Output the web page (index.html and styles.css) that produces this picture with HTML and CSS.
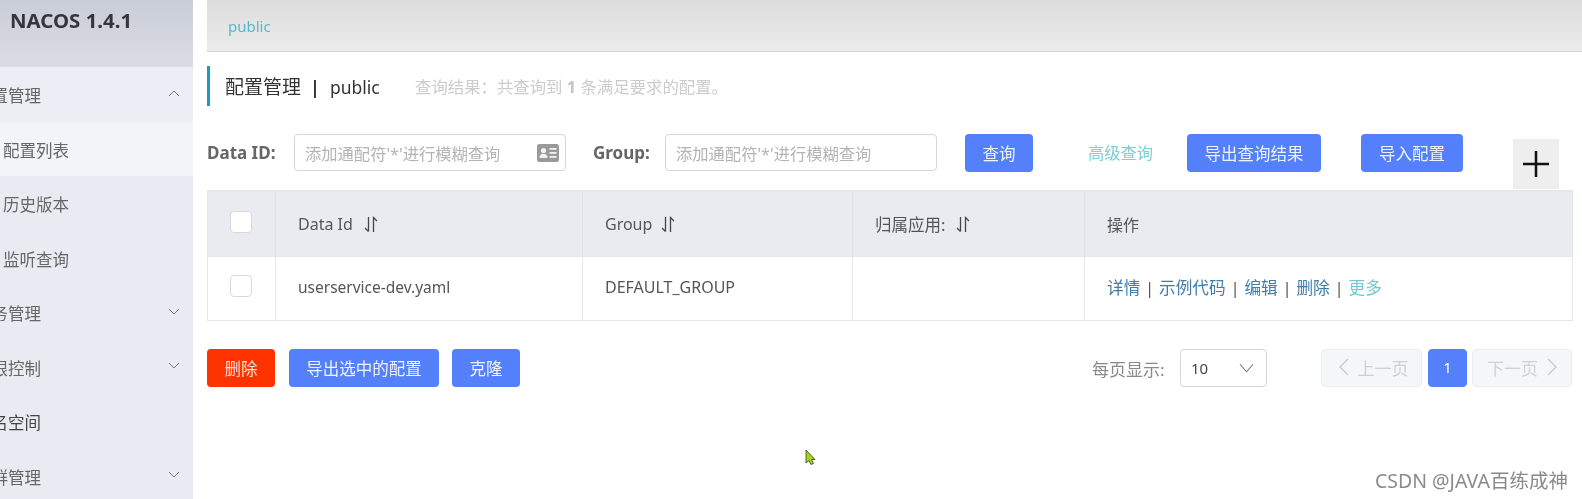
FILE: index.html
```html
<!DOCTYPE html>
<html lang="zh">
<head>
<meta charset="utf-8">
<title>NACOS</title>
<link rel="stylesheet" href="styles.css">
</head>
<body>
<div class="app">
  <aside class="sidebar">
    <div class="brand">NACOS 1.4.1</div>
    <nav class="menu">
      <div class="item group"><span class="clip">配置管理</span>
        <svg class="chev" viewBox="0 0 12 7"><path d="M1 6 6 1l5 5"/></svg></div>
      <div class="item sub active">配置列表</div>
      <div class="item sub">历史版本</div>
      <div class="item sub">监听查询</div>
      <div class="item group"><span class="clip">服务管理</span>
        <svg class="chev" viewBox="0 0 12 7"><path d="M1 1l5 5 5-5"/></svg></div>
      <div class="item group"><span class="clip">权限控制</span>
        <svg class="chev" viewBox="0 0 12 7"><path d="M1 1l5 5 5-5"/></svg></div>
      <div class="item group"><span class="clip dark">命名空间</span></div>
      <div class="item group"><span class="clip">集群管理</span>
        <svg class="chev" viewBox="0 0 12 7"><path d="M1 1l5 5 5-5"/></svg></div>
    </nav>
  </aside>
  <main class="main">
    <div class="topbar"><span class="ns">public</span></div>
    <div class="title">
      <h1>配置管理<span class="sep">|</span><span class="ns-name">public</span></h1>
      <p class="result">查询结果：共查询到 <b>1</b> 条满足要求的配置。</p>
    </div>
    <div class="filters">
      <label class="lbl lbl-id">Data ID:</label>
      <div class="input input-id"><span>添加通配符'*'进行模糊查询</span>
        <svg class="card" viewBox="0 0 22 18"><rect width="22" height="18" rx="2.5"/><circle cx="6.5" cy="6.5" r="2.6" class="cut"/><path class="cut" d="M2.5 14c0-3 1.8-4.2 4-4.2s4 1.2 4 4.2z"/><path class="cut" d="M12.5 4h7v1.8h-7zM12.5 8h7v1.8h-7zM12.5 12h7v1.8h-7z"/></svg>
      </div>
      <label class="lbl lbl-group">Group:</label>
      <div class="input input-group"><span>添加通配符'*'进行模糊查询</span></div>
      <button class="btn btn-query">查询</button>
      <a class="adv">高级查询</a>
      <button class="btn btn-export">导出查询结果</button>
      <button class="btn btn-import">导入配置</button>
      <button class="plus"><svg viewBox="0 0 26 26"><path d="M13 0v26M0 13h26"/></svg></button>
    </div>
    <div class="table">
      <div class="row head">
        <div class="cell c0"><i class="check"></i></div>
        <div class="cell c1">Data Id<svg class="sort" viewBox="0 0 14 17"><path d="M4.500 1v14.500M1 12l3.500 3.500M9.500 16V1.500L13 5"/></svg></div>
        <div class="cell c2">Group<svg class="sort sort-tight" viewBox="0 0 14 17"><path d="M4.500 1v14.500M1 12l3.500 3.500M9.500 16V1.500L13 5"/></svg></div>
        <div class="cell c3 app-col">归属应用:<svg class="sort" viewBox="0 0 14 17"><path d="M4.500 1v14.500M1 12l3.500 3.500M9.500 16V1.500L13 5"/></svg></div>
        <div class="cell c4">操作</div>
      </div>
      <div class="row body">
        <div class="cell c0"><i class="check"></i></div>
        <div class="cell c1 file">userservice-dev.yaml</div>
        <div class="cell c2">DEFAULT_GROUP</div>
        <div class="cell c3"></div>
        <div class="cell c4 ops"><a>详情</a><s>|</s><a>示例代码</a><s>|</s><a>编辑</a><s>|</s><a>删除</a><s>|</s><a class="more">更多</a></div>
      </div>
    </div>
    <div class="footer">
      <button class="btn btn-del">删除</button>
      <button class="btn btn-sel">导出选中的配置</button>
      <button class="btn btn-clone">克隆</button>
      <span class="perpage">每页显示:</span>
      <div class="select"><span>10</span><svg viewBox="0 0 16 10"><path d="M1 1l7 8 7-8"/></svg></div>
      <div class="page prev"><svg viewBox="0 0 10 18"><path d="M9 1 1 9l8 8"/></svg>上一页</div>
      <div class="page cur">1</div>
      <div class="page next">下一页<svg viewBox="0 0 10 18"><path d="M1 1l8 8-8 8"/></svg></div>
    </div>
    <div class="bottom">
      <svg class="cursor" viewBox="0 0 12 17"><path d="M1 1v13l3-2.500 2 4 2.500-1-2-4H10z"/></svg>
      <span class="mark">CSDN @JAVA百练成神</span>
    </div>
  </main>
</div>
</body>
</html>
```
FILE: styles.css
```css
* { box-sizing: border-box; }
html, body { margin: 0; height: 100%; overflow: hidden; background: #fff; }
body { font-family: "Noto Sans", "Noto Sans CJK SC", sans-serif; color: #555; }
.app { display: flex; width: 1582px; height: 499px; filter: blur(0.45px); }

.sidebar { width: 193px; flex: none; background: #e9ebf2; }
.brand { height: 67px; padding: 7px 0 0 10px; font-size: 20.400px; line-height: 26px; font-weight: 700; color: #33363c; white-space: nowrap;
  background: linear-gradient(180deg, #c9cdd7, #dadde6); }
.item { height: 54.500px; display: flex; align-items: center; justify-content: space-between; font-size: 16.500px; color: #666; overflow: hidden; padding: 2px 13px 0 0; }
.group { background: #e9ebf2; }
.menu .item:first-child { background: #ebeef5; }
.sub { padding-left: 3px; }
.active { background: #f2f4f9; }
.clip { margin-left: -25px; white-space: nowrap; }
.clip.dark { color: #444; }
.chev { width: 12px; height: 7px; fill: none; stroke: #777; stroke-width: 1; margin-top: -4px; }

.main { flex: 1; padding: 0 0 0 14px; display: flex; flex-direction: column; min-width: 0; background: #fff; }
.topbar { height: 52px; background: linear-gradient(180deg, #dcdcdc, #ececec); border-bottom: 1px solid #d4d4d4; padding: 16px 0 0 21px; }
.ns { font-size: 15px; line-height: 20px; color: #58b7cf; display: block; }

.title { height: 40px; margin-top: 14px; border-left: 3px solid #1a9cbe; display: flex; align-items: center; padding-left: 15px; }
.title h1 { margin: 0; font-size: 19px; font-weight: 400; color: #333; width: 190px; white-space: nowrap; }
.sep { margin: 0 10px 0 9px; font-size: 18px; font-weight: 700; }
.ns-name { font-size: 17.500px; }
.result { margin: 0; font-size: 16.400px; color: #ccc; white-space: nowrap; }
.result b { color: #c4c4c4; }

.filters { height: 84px; padding-top: 28px; display: flex; align-items: flex-start; }
.lbl { font-size: 17px; font-weight: 700; color: #666; line-height: 37px; white-space: nowrap; }
.lbl-id { width: 87px; }
.lbl-group { width: 72px; margin-left: 27px; }
.input { height: 37px; width: 272px; border: 1px solid #d4d6da; border-radius: 4px; background: #fff; display: flex; align-items: center; justify-content: space-between; padding: 0 6px 0 10px; font-size: 16.300px; color: #b4b4b4; white-space: nowrap; }
.card { width: 22px; height: 18px; fill: #9a9a9a; }
.card .cut { fill: #f2f2f2; }
.btn { border: none; border-radius: 4px; height: 38px; background: #5580fb; color: #eef3ff; font: inherit; font-size: 16.500px; padding: 0; white-space: nowrap; }
.btn-query { width: 68px; margin-left: 28px; }
.adv { width: 66px; margin-left: 55px; line-height: 38px; font-size: 16.300px; color: #7ccfd9; white-space: nowrap; }
.btn-export { width: 134px; margin-left: 33px; }
.btn-import { width: 102px; margin-left: 40px; }
.plus { width: 46px; height: 50px; margin: 5px 0 0 50px; flex: none; border: none; background: #eeeeee; padding: 0; display: flex; align-items: center; justify-content: center; }
.plus svg { width: 26px; height: 26px; fill: none; stroke: #111; stroke-width: 2.500; }

.table { width: 1366px; border: 1px solid #e6e7ea; border-width: 2px 1px 1px; }
.row { display: flex; }
.head { height: 65px; background: #eaebf0; }
.body { height: 63px; background: #fff; }
.cell { display: flex; align-items: center; font-size: 16px; color: #555; border-right: 1px solid #e6e7ea; padding-left: 22px; white-space: nowrap; }
.cell:last-child { border-right: none; }
.head .cell { border-right-color: #e2e3e8; border-bottom: 1px solid #e6e7ea; }
.c0 { width: 68px; padding-left: 22px; }
.c1 { width: 307px; }
.c2 { width: 270px; }
.c3 { width: 232px; }
.c4 { flex: 1; }
.app-col { font-size: 16.500px; }
.body .cell { padding-bottom: 3px; }
.body .c0 { padding-bottom: 0; }
.file { font-size: 15.500px; }
.check { display: block; width: 22px; height: 22px; border: 1px solid #d8d9dc; border-radius: 4px; background: #fff; margin-top: -5px; }
.sort { width: 14px; height: 17px; margin-left: 11px; fill: none; stroke: #444; stroke-width: 1.300; }
.sort-tight { margin-left: 9px; }
.ops { font-size: 16.650px; }
.ops a { color: #3f7dad; }
.ops s { text-decoration: none; color: #555; margin: 0 4.800px; }
.ops .more { color: #72c7d4; }

.footer { display: flex; align-items: center; height: 38px; margin-top: 28px; }
.btn-del { width: 68px; background: #ff3300; color: #fde2da; }
.btn-sel { width: 150px; margin-left: 14px; }
.btn-clone { width: 68px; margin-left: 13px; }
.perpage { margin-left: 572px; width: 88px; font-size: 17px; color: #8a8a8a; white-space: nowrap; }
.select { width: 87px; height: 38px; border: 1px solid #d4d6da; border-radius: 4px; display: flex; align-items: center; justify-content: space-between; padding: 0 12px 0 10px; font-size: 15px; color: #444; }
.select svg { width: 15px; height: 10px; fill: none; stroke: #777; stroke-width: 1.200; }
.page { height: 38px; border: 1px solid #eceef2; border-radius: 4px; background: #f5f6f8; display: flex; align-items: center; justify-content: center; gap: 9px; font-size: 17px; color: #cfd1d6; white-space: nowrap; padding-bottom: 2px; }
.page svg { width: 10px; height: 18px; fill: none; stroke: #c8cbd0; stroke-width: 1.500; }
.prev { width: 101px; margin-left: 54px; padding-left: 4px; }
.cur { width: 39px; margin-left: 6px; background: #5580fb; border-color: #5580fb; color: #fff; font-size: 15px; }
.next { width: 100px; margin-left: 5px; }

.bottom { flex: 1; position: relative; }
.cursor { position: absolute; left: 598px; top: 62px; width: 12px; height: 17px; fill: #a3d321; stroke: #39420f; stroke-width: .8; }
.mark { position: absolute; right: 14px; top: 78px; font-size: 19.500px; color: #8a8a8a; white-space: nowrap; }
```
